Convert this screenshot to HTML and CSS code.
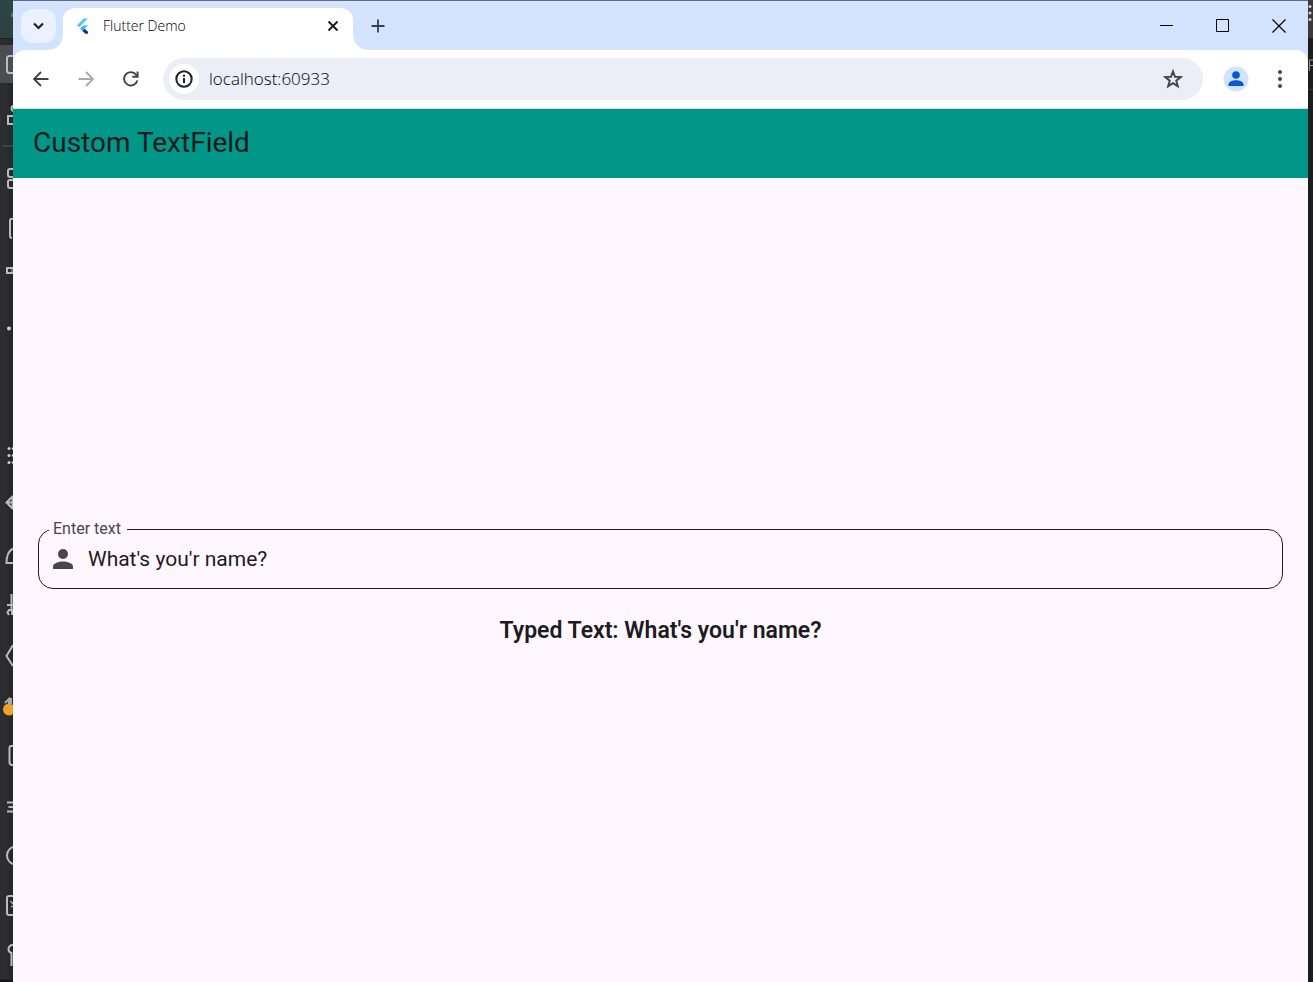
FILE: index.html
```html
<!DOCTYPE html>
<html lang="en">
<head>
<meta charset="utf-8">
<title>Flutter Demo</title>
<link rel="stylesheet" href="styles.css">
</head>
<body>
<div class="desktop">
  <aside class="strip strip-left" aria-hidden="true">
    <svg class="strip-art" width="13" height="982" viewBox="0 0 13 982" fill="none" stroke="#b9bbc0" stroke-width="2">
      <defs><linearGradient id="bar" x1="0" y1="0" x2="0" y2="1"><stop offset="0" stop-color="#2d4644"/><stop offset="1" stop-color="#2c403f"/></linearGradient></defs>
      <rect width="13" height="38" fill="url(#bar)" stroke="none"/>
      <path d="M0 38.500H13" stroke="#1e1f22" stroke-width="1"/>
      <path d="M13 13q-1.500 1-1 4" stroke="#3fa35b" stroke-width="1.500"/>
      <rect x="-4" y="45" width="30" height="38" rx="7" fill="#4b4d53" stroke="none"/>
      <path d="M13 56H9.500Q7 56 7 58.500V70.500Q7 73 9.500 73H13"/>
      <circle cx="14" cy="108.500" r="2.500"/><rect x="8" y="116" width="8" height="8"/>
      <path d="M2 146H13" stroke="#4a4b50" stroke-width="1.500"/>
      <rect x="8" y="169" width="8" height="8" rx="2"/><rect x="8" y="180" width="8" height="8" rx="2"/>
      <path d="M13 219H11Q10 219 10 221V236Q10 238 12 238"/>
      <path d="M13 268H7V273H13"/><path d="M12 267V274" stroke-width="1"/>
      <circle cx="9" cy="328.500" r="2" fill="#ced0d6" stroke="none"/>
      <g fill="#ced0d6" stroke="none"><circle cx="9" cy="448.500" r="1.500"/><circle cx="13" cy="448.500" r="1.300"/><circle cx="9" cy="455.500" r="1.500"/><circle cx="13" cy="455.500" r="1.300"/><circle cx="9" cy="462.500" r="1.500"/><circle cx="13" cy="462.500" r="1.300"/></g>
      <path d="M13 496L6.500 502.500L13 509M7 502.500H13M12.500 498V508"/>
      <path d="M13 548.500Q6.500 552 6.500 563H13"/>
      <path d="M11.500 594V605M7 605H13M11.500 605V610M13 610H9L7.500 612.500L9 615M12 610V615"/>
      <path d="M13 645L6.500 656L13 666"/>
      <path d="M5 703L9 699V704M11 698V704" stroke="#a9abb0"/><circle cx="9" cy="709.500" r="6" fill="#eca32c" stroke="none"/>
      <path d="M13 746H11Q9.500 746 9.500 748V762Q9.500 765 12 765H13"/>
      <path d="M7 802.500H13M8.500 807H13M7 811.500H13"/>
      <circle cx="16" cy="855.500" r="9"/>
      <path d="M13 896H9Q7 896 7 898V913Q7 915 9 915H13"/><path d="M10.500 901L13 904M11 907L13 906" stroke-width="1.200"/>
      <path d="M13 945Q8.500 945 8.500 949.500Q8.500 952 11.500 953V966"/>
      <path d="M0 981H13" stroke="#171819" stroke-width="3"/>
    </svg>
  </aside>

  <div class="browser">
    <header class="tabstrip">
      <button class="tab-search" type="button" aria-label="Search tabs">
        <svg width="13" height="14" viewBox="0 0 13 14" fill="none" stroke="#1f2023" stroke-width="2.200"><path d="M2 4.500L6.500 9L11 4.500"/></svg>
      </button>
      <div class="tab">
        <svg class="tab-icon" width="16" height="16" viewBox="0 0 16 16">
          <path fill="#54c5f8" d="M8.900 0.500H13L4.200 9.300L2 7.200Z"/>
          <path fill="#40bdf5" d="M9 7.200H13L9.600 10.600L7.500 12.700L5.300 10.600Z"/>
          <path fill="#29b6f6" d="M5.300 10.700L7.500 8.600L9.600 10.700L7.500 12.800Z"/>
          <path fill="#01579b" d="M7.500 12.800L9.600 10.700L13 14V15.500H10.200Z"/>
          <path fill="#0b2e9c" d="M7.500 12.800L10.500 11.800L13 14V15.500H10.200Z"/>
        </svg>
        <span class="tab-title">Flutter Demo</span>
        <button class="plain" type="button" aria-label="Close tab">
          <svg width="12" height="12" viewBox="0 0 12 12" stroke="#1f2023" stroke-width="2"><path d="M1.500 1.500L10.500 10.500M10.500 1.500L1.500 10.500"/></svg>
        </button>
      </div>
      <button class="plain new-tab" type="button" aria-label="New tab">
        <svg width="14" height="14" viewBox="0 0 14 14" stroke="#3b3d41" stroke-width="1.800"><path d="M7 0.500V13.500M0.500 7H13.500"/></svg>
      </button>
      <div class="window-controls">
        <button class="plain" type="button" aria-label="Minimize"><svg width="13" height="13" viewBox="0 0 13 13" stroke="#000"><path d="M0 6.500H13"/></svg></button>
        <button class="plain" type="button" aria-label="Maximize"><svg width="13" height="13" viewBox="0 0 13 13" fill="none" stroke="#000"><path d="M0.500 0.500H12.500V12.500H0.500Z"/></svg></button>
        <button class="plain" type="button" aria-label="Close"><svg width="14" height="14" viewBox="0 0 14 14" stroke="#000" stroke-width="1.200"><path d="M0.500 0.500L13.500 13.500M13.500 0.500L0.500 13.500"/></svg></button>
      </div>
    </header>

    <div class="toolbar-back">
      <nav class="toolbar" aria-label="Browser">
        <button class="plain" type="button" aria-label="Back"><svg width="16" height="16" viewBox="0 0 16 16" fill="none" stroke="#3f4145" stroke-width="1.800"><path d="M15.500 8H1.500M8 1L1 8L8 15"/></svg></button>
        <button class="plain" type="button" aria-label="Forward" disabled><svg width="16" height="16" viewBox="0 0 16 16" fill="none" stroke="#a8a9ab" stroke-width="1.800"><path d="M0.500 8H14.500M8 1L15 8L8 15"/></svg></button>
        <button class="plain" type="button" aria-label="Reload"><svg width="16" height="16" viewBox="0 0 16 16" fill="none" stroke="#3f4145" stroke-width="1.900"><path d="M14.300 9.500A6.700 6.700 0 1 1 13.200 3.800L14.500 5.200"/><path d="M14.600 0.500V5.700H9.300"/></svg></button>
        <div class="omnibox">
          <button class="site-info" type="button" aria-label="Site information">
            <svg width="18" height="18" viewBox="0 0 18 18" fill="none" stroke="#1f2023" stroke-width="2"><circle cx="9" cy="9" r="7.700"/><path d="M9 8V13M9 4.800V6.800"/></svg>
          </button>
          <input class="address" type="text" aria-label="Address" value="localhost:60933">
          <button class="plain" type="button" aria-label="Bookmark">
            <svg width="20" height="20" viewBox="0 0 20 20" fill="none" stroke="#454746" stroke-width="2"><path d="M10 2.500L12 7.800L17.700 8.100L13.300 11.700L14.800 17.200L10 14.100L5.200 17.200L6.700 11.700L2.300 8.100L8 7.800Z"/></svg>
          </button>
        </div>
        <button class="plain" type="button" aria-label="Profile">
          <svg width="26" height="26" viewBox="0 0 26 26"><circle cx="13" cy="13" r="12.500" fill="#d3e3fd"/><g fill="#0b57d0"><circle cx="13" cy="9" r="3.800"/><path d="M5.500 20V18.200C5.500 15.500 10 14.200 13 14.200S20.500 15.500 20.500 18.200V20Z"/></g></svg>
        </button>
        <button class="plain" type="button" aria-label="Menu">
          <svg width="4" height="18" viewBox="0 0 4 18" fill="#454746"><circle cx="2" cy="2" r="2"/><circle cx="2" cy="9" r="2"/><circle cx="2" cy="16" r="2"/></svg>
        </button>
      </nav>
    </div>

    <div class="appbar"><h1 class="appbar-title">Custom TextField</h1></div>

    <main class="page">
      <fieldset class="field">
        <legend class="field-legend"><label for="entry">Enter text</label></legend>
        <div class="field-row">
          <svg width="20" height="20" viewBox="0 0 20 20" fill="#49454f"><circle cx="10" cy="5" r="5"/><path d="M0 20V17.500C0 14.200 6 12.500 10 12.500S20 14.200 20 17.500V20Z"/></svg>
          <input class="field-input" id="entry" type="text" value="What's you'r name?">
        </div>
      </fieldset>
      <p class="typed">Typed Text: What's you'r name?</p>
    </main>
  </div>

  <aside class="strip strip-right" aria-hidden="true">
    <svg class="strip-art" width="5" height="982" viewBox="0 0 5 982">
      <rect width="5" height="38" fill="#383b3a"/>
      <g fill="#ced0d6"><circle cx="2" cy="6.500" r="1.500"/><circle cx="2" cy="13" r="1.500"/><circle cx="2" cy="19.500" r="1.500"/></g>
      <path d="M1.500 71V60H5M1.500 65.500H5" fill="none" stroke="#a79b87"/>
      <path d="M0 89.500H5" stroke="#393b40"/>
    </svg>
  </aside>
</div>
</body>
</html>
```

FILE: styles.css
```css
* { box-sizing: border-box; }

body {
  margin: 0;
  font-family: Roboto, sans-serif;
  color: #1d1b20;
}

svg { display: block; flex: none; }

.desktop {
  display: flex;
  height: 100vh;
  overflow: hidden;
}

.strip { flex: none; overflow: hidden; }
.strip-left { width: 13px; background: linear-gradient(to right, #2b2d30 40%, #242628); }
.strip-right { width: 5px; background: #1c1e1d; }

.browser {
  flex: 1;
  min-width: 0;
  display: flex;
  flex-direction: column;
  background: #fef7ff;
}

.plain {
  display: flex;
  align-items: center;
  justify-content: center;
  flex: none;
  padding: 0;
  border: 0;
  background: none;
}

/* Tab strip */
.tabstrip {
  display: flex;
  align-items: center;
  height: 50px;
  padding-left: 8px;
  border-top: 1px solid #656b78;
  background: #d3e3fd;
}

.tab-search {
  display: flex;
  align-items: center;
  justify-content: center;
  width: 35px;
  height: 34px;
  padding: 0;
  border: 0;
  border-radius: 12px;
  background: #ebf1fe;
}

.tab {
  position: relative;
  display: flex;
  align-items: center;
  align-self: flex-end;
  width: 290px;
  height: 42px;
  margin-left: 7px;
  padding: 0 14px 7px 12px;
  border-radius: 12px 12px 0 0;
  background: #fff;
}

.tab::before,
.tab::after {
  content: "";
  position: absolute;
  bottom: 0;
  width: 14px;
  height: 14px;
}
.tab::before { right: 100%; background: radial-gradient(circle at 0 0, transparent 13px, #fff 14px); }
.tab::after { left: 100%; background: radial-gradient(circle at 100% 0, transparent 13px, #fff 14px); }

.tab-title {
  flex: 1;
  margin-left: 12px;
  font: 300 14px/20px "Open Sans", sans-serif;
  color: #000;
}

.new-tab { margin-left: 18px; }

.window-controls {
  display: flex;
  align-items: center;
  gap: 43px;
  margin-left: auto;
  padding-right: 22px;
}

/* Toolbar */
.toolbar-back { background: #d3e3fd; }

.toolbar {
  display: flex;
  align-items: center;
  gap: 29px;
  height: 59px;
  padding: 0 26px 1px 20px;
  border-bottom: 1px solid #dcdfe3;
  border-radius: 12px 12px 0 0;
  background: #fff;
}

.omnibox {
  flex: 1;
  display: flex;
  align-items: center;
  height: 42px;
  margin: 0 -9px 0 -5px;
  padding: 0 20px 0 6px;
  border-radius: 21px;
  background: #ebeef7;
}

.site-info {
  display: flex;
  align-items: center;
  justify-content: center;
  flex: none;
  width: 30px;
  height: 30px;
  padding: 0;
  border: 0;
  border-radius: 50%;
  background: #fff;
}

.address {
  flex: 1;
  min-width: 0;
  margin-left: 10px;
  padding: 0;
  border: 0;
  outline: 0;
  background: none;
  font: 300 17px/24px "Open Sans", sans-serif;
  color: #000;
}

/* Application */
.appbar {
  display: flex;
  align-items: center;
  height: 69px;
  padding: 0 20px 2px;
  background: #009688;
}

.appbar-title {
  margin: 0;
  font-size: 28px;
  font-weight: 400;
  line-height: 36px;
}

.page {
  flex: 1;
  display: flex;
  flex-direction: column;
  justify-content: center;
  padding: 6px 25px 0;
}

.field {
  min-width: 0;
  margin: 0;
  padding: 0 10px;
  border: 1px solid #1d1b20;
  border-radius: 15px;
}

.field-legend {
  padding: 0 6px 0 4px;
  font-size: 16px;
  line-height: 18px;
  color: #49454f;
}

.field-row {
  display: flex;
  align-items: center;
  gap: 15px;
  padding: 6px 4px 14px;
}

.field-input {
  flex: 1;
  min-width: 0;
  padding: 0;
  border: 0;
  outline: 0;
  background: none;
  font: 21px/30px Roboto, sans-serif;
  color: #1d1b20;
}

.typed {
  margin: 27px 0 0;
  text-align: center;
  font-size: 23px;
  font-weight: 600;
  line-height: 30px;
}
```
